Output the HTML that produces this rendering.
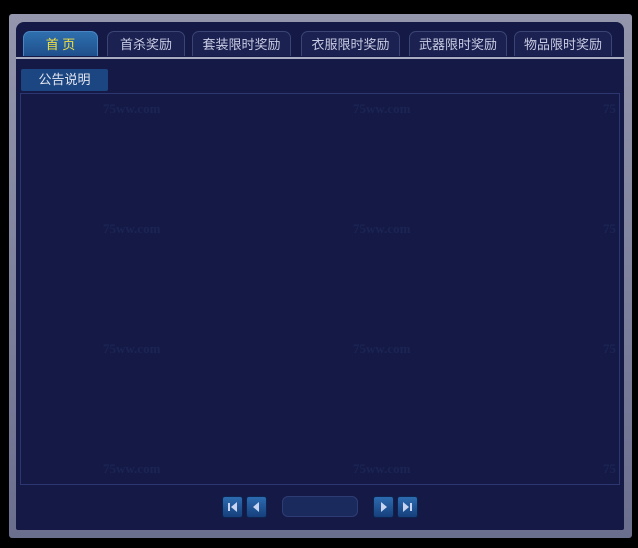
<!DOCTYPE html><html><head><meta charset="utf-8"><style>
body{margin:0;width:638px;height:548px;background:#000;position:relative;overflow:hidden;font-family:"Liberation Sans","Noto Sans CJK SC",sans-serif}
.a{position:absolute}
.frame{left:9px;top:14px;width:623px;height:524px;background:linear-gradient(#9496ad,#6b6f8e);border-radius:3px}
.inner{left:16px;top:22px;width:608px;height:508px;background:#141a45;border-radius:8px 8px 2px 2px}
.tab{position:absolute;top:31px;height:25px;border:1px solid #3a4575;border-bottom:none;border-radius:7px 7px 0 0;background:#1b2150;color:#c8cce4;font-size:13px;text-align:center;line-height:26px;box-sizing:border-box}
.sel{background:linear-gradient(#2f6fae,#1f4f8c);color:#f4e13c;border-color:#4a86c4}
.line{left:16px;top:57px;width:608px;height:2px;background:#a9adc4}
.box{left:20px;top:93px;width:600px;height:392px;border:1px solid #2c3670;box-sizing:border-box}
.wm{position:absolute;color:#1c2454;font:bold 13px "Liberation Serif",serif}
.btn{position:absolute;top:496px;width:21px;height:22px;background:linear-gradient(#2d6bb0,#163f7c);border:1px solid #0d2350;border-radius:3px;box-sizing:border-box}
</style></head><body>
<div class="a frame"></div><div class="a inner"></div>
<div class="tab sel" style="left:23px;width:75px">首 页</div>
<div class="tab" style="left:107px;width:78px">首杀奖励</div>
<div class="tab" style="left:192px;width:99px">套装限时奖励</div>
<div class="tab" style="left:301px;width:99px">衣服限时奖励</div>
<div class="tab" style="left:409px;width:98px">武器限时奖励</div>
<div class="tab" style="left:514px;width:98px">物品限时奖励</div>
<div class="a line"></div>
<div class="a" style="left:21px;top:69px;width:87px;height:22px;background:#1c4681;color:#e4e6f0;font-size:13px;line-height:22px;text-align:center;border-radius:2px">公告说明</div>
<div class="a box"></div>
<div class="wm" style="left:103px;top:101px">75ww.com</div><div class="wm" style="left:353px;top:101px">75ww.com</div><div class="wm" style="left:603px;top:101px">75</div>
<div class="wm" style="left:103px;top:221px">75ww.com</div><div class="wm" style="left:353px;top:221px">75ww.com</div><div class="wm" style="left:603px;top:221px">75</div>
<div class="wm" style="left:103px;top:341px">75ww.com</div><div class="wm" style="left:353px;top:341px">75ww.com</div><div class="wm" style="left:603px;top:341px">75</div>
<div class="wm" style="left:103px;top:461px">75ww.com</div><div class="wm" style="left:353px;top:461px">75ww.com</div><div class="wm" style="left:603px;top:461px">75</div>
<div class="btn" style="left:222px"><svg width="19" height="20"><rect x="5" y="6" width="2" height="8" fill="#c8d4f0"/><path d="M14 5v10l-6-5z" fill="#c8d4f0"/></svg></div>
<div class="btn" style="left:246px"><svg width="19" height="20"><path d="M12 5v10l-6-5z" fill="#c8d4f0"/></svg></div>
<div class="a" style="left:282px;top:496px;width:76px;height:21px;background:#1b2a5c;border:1px solid #2e3c74;border-radius:6px;box-sizing:border-box"></div>
<div class="btn" style="left:373px"><svg width="19" height="20"><path d="M7 5v10l6-5z" fill="#c8d4f0"/></svg></div>
<div class="btn" style="left:397px"><svg width="19" height="20"><path d="M5 5v10l6-5z" fill="#c8d4f0"/><rect x="12" y="6" width="2" height="8" fill="#c8d4f0"/></svg></div>
</body></html>
